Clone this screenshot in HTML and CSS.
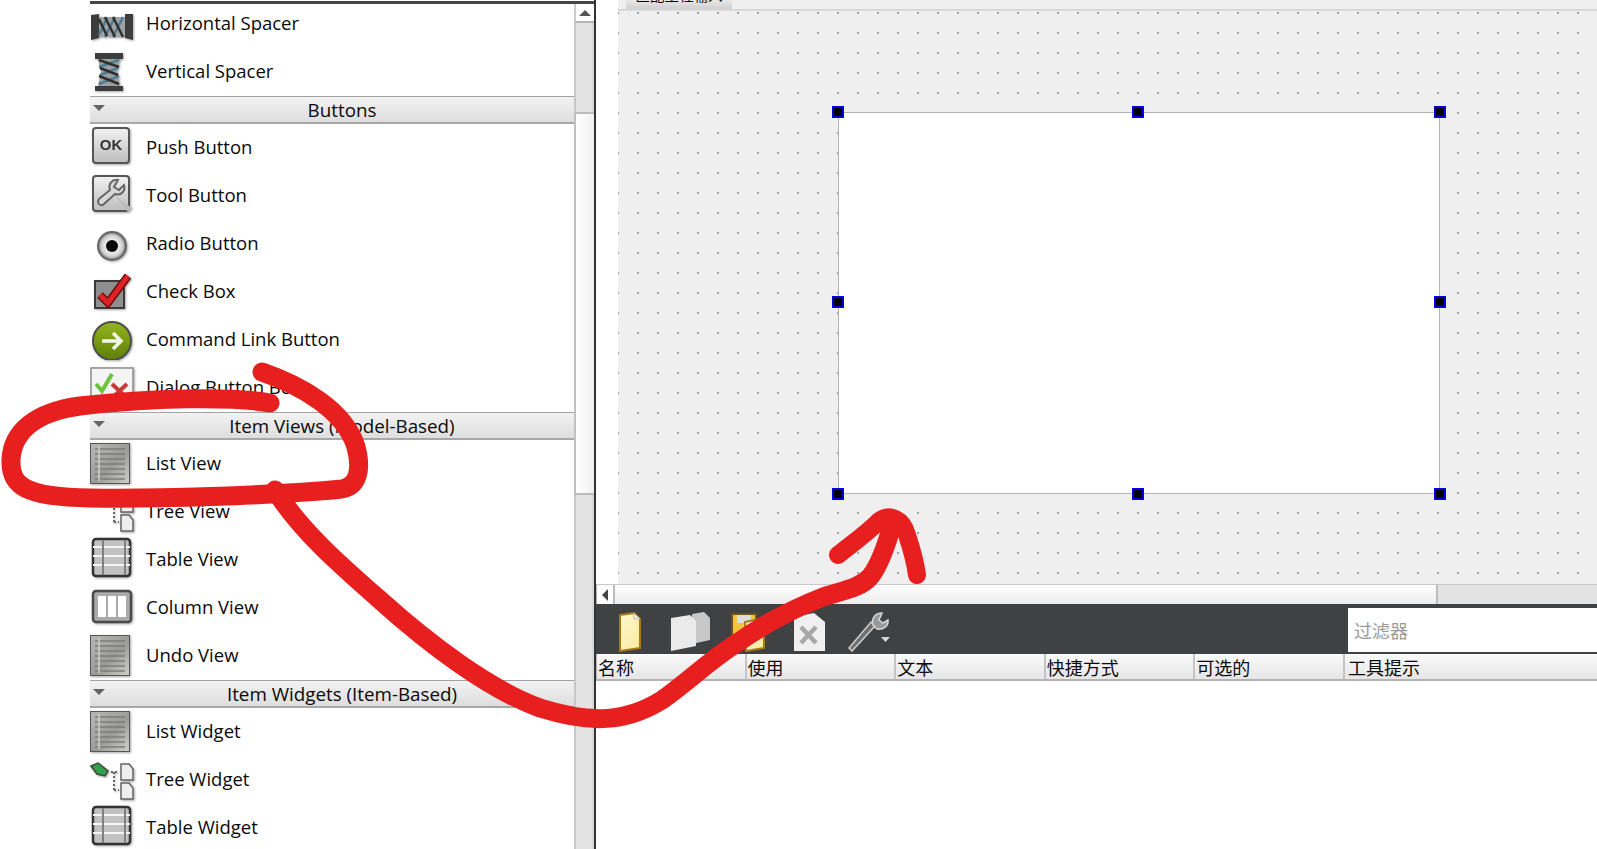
FILE: index.html
```html
<!DOCTYPE html>
<html lang="zh">
<head>
<meta charset="utf-8">
<title>Qt Designer</title>
<link rel="stylesheet" href="styles.css">
</head>
<body>
<svg class="defs" width="0" height="0" aria-hidden="true">
  <defs>
    <linearGradient id="gBtn" x1="0" y1="0" x2="0" y2="1"><stop offset="0" stop-color="#f2f2f2"/><stop offset="1" stop-color="#bdbdbd"/></linearGradient>
    <linearGradient id="gList" x1="0" y1="0" x2="1" y2="1"><stop offset="0" stop-color="#b8b8b4"/><stop offset=".55" stop-color="#9a9a96"/><stop offset="1" stop-color="#d0d0cc"/></linearGradient>
    <linearGradient id="gGreen" x1="0" y1="0" x2="0" y2="1"><stop offset="0" stop-color="#94b51d"/><stop offset="1" stop-color="#5f7f07"/></linearGradient>
    <linearGradient id="gYellow" x1="0" y1="0" x2="1" y2="1"><stop offset="0" stop-color="#fff8cf"/><stop offset="1" stop-color="#fbeb9e"/></linearGradient>
    <radialGradient id="gRadio"><stop offset=".3" stop-color="#fafafa"/><stop offset=".75" stop-color="#d0d0d0"/><stop offset="1" stop-color="#777"/></radialGradient>

    <symbol id="i-hspacer" viewBox="0 0 44 44">
      <path d="M1 15 L9 14 V38 L1 40 Z M35 14 H43 V40 L35 38 Z" fill="#3d3d3d"/>
      <rect x="9" y="17" width="26" height="20" fill="#a2a2a2"/>
      <path d="M9 35 L17 18 M15 37 L25 17 M23 37 L33 17" stroke="#4d7d95" stroke-width="2.5" fill="none"/>
      <path d="M9 19 L17 36 M15 17 L25 37 M23 17 L33 37" stroke="#2e2e2e" stroke-width="2.5" fill="none"/>
    </symbol>
    <symbol id="i-vspacer" viewBox="0 0 44 44">
      <path d="M5 6 H33 V12 H5 Z M5 39 H33 V45 H5 Z" fill="#3d3d3d"/>
      <path d="M8 12 H30 L27 25 L30 39 H8 L11 25 Z" fill="#9e9e9e"/>
      <path d="M9 20 L29 13 M10 28 L28 21 M9 37 L29 29" stroke="#4d7d95" stroke-width="2.5" fill="none"/>
      <path d="M9 13 L29 20 M10 21 L28 28 M9 29 L29 37" stroke="#2e2e2e" stroke-width="2.5" fill="none"/>
    </symbol>
    <symbol id="i-ok" viewBox="0 0 44 44">
      <rect x="3" y="4" width="36" height="35" rx="3" fill="url(#gBtn)" stroke="#555" stroke-width="2"/>
      <text x="21" y="26" class="ok-text" text-anchor="middle">OK</text>
    </symbol>
    <symbol id="i-tool" viewBox="0 0 44 44">
      <rect x="3" y="4" width="36" height="35" rx="3" fill="url(#gBtn)" stroke="#555" stroke-width="2"/>
      <path d="M28 8 C22 7 18 12 20 18 L9 27 C6 31 11 35 14 32 L25 22 C31 24 36 19 34 13 L29 18 L24 15 Z" fill="#d8d8d8" stroke="#666" stroke-width="2"/>
      <path d="M25 24 L38 40 L42 36 Z" fill="#bbb"/>
    </symbol>
    <symbol id="i-radio" viewBox="0 0 44 44">
      <circle cx="22" cy="26" r="14" fill="url(#gRadio)" stroke="#666" stroke-width="2"/>
      <circle cx="22" cy="26" r="6" fill="#0a0a0a"/>
    </symbol>
    <symbol id="i-check" viewBox="0 0 44 44">
      <rect x="5" y="13" width="29" height="27" fill="#8f8f8f" stroke="#3a3a3a" stroke-width="2"/>
      <path d="M10 27 L18 35 L38 8" fill="none" stroke="#6e0d0d" stroke-width="8"/>
      <path d="M10 27 L18 35 L38 8" fill="none" stroke="#dd2228" stroke-width="5"/>
    </symbol>
    <symbol id="i-cmd" viewBox="0 0 44 44">
      <circle cx="22" cy="25" r="19" fill="url(#gGreen)" stroke="#4d4d4d" stroke-width="2"/>
      <path d="M12 25 H30 M23 17 L31 25 L23 33" fill="none" stroke="#f2f4e6" stroke-width="3.5"/>
    </symbol>
    <symbol id="i-dialog" viewBox="0 0 44 44">
      <rect x="1" y="4" width="42" height="44" fill="#f4f4f4" stroke="#8f8f8f" stroke-width="1.5"/>
      <path d="M6 20 L12 27 L22 10" fill="none" stroke="#6cc53c" stroke-width="4"/>
      <path d="M22 20 L37 34 M37 20 L22 34" fill="none" stroke="#c83a3a" stroke-width="4"/>
    </symbol>
    <symbol id="i-list" viewBox="0 0 44 44">
      <rect x="0.5" y="3.5" width="39" height="40" fill="url(#gList)" stroke="#555"/>
      <path d="M5 9 H35 M5 14 H35 M5 19 H35 M5 24 H35 M5 29 H35 M5 34 H35 M5 39 H35" stroke="#7c7c78" stroke-width="1.5"/>
      <path d="M9 6 V41" stroke="#cfcfcb" stroke-width="1.5"/>
    </symbol>
    <symbol id="i-tree" viewBox="0 0 44 44">
      <path d="M21 16 H27 M24 16 V34 M24 34 H29" stroke="#666" stroke-width="2" stroke-dasharray="2 2" fill="none"/>
      <path d="M31 8 H39 L43 13 V24 H31 Z" fill="#eee" stroke="#666" stroke-width="1.5"/>
      <path d="M31 27 H39 L43 32 V43 H31 Z" fill="#eee" stroke="#666" stroke-width="1.5"/>
    </symbol>
    <symbol id="i-treew" viewBox="0 0 44 44">
      <path d="M21 16 H27 M24 16 V34 M24 34 H29" stroke="#666" stroke-width="2" stroke-dasharray="2 2" fill="none"/>
      <path d="M31 8 H39 L43 13 V24 H31 Z" fill="#eee" stroke="#666" stroke-width="1.5"/>
      <path d="M31 27 H39 L43 32 V43 H31 Z" fill="#eee" stroke="#666" stroke-width="1.5"/>
      <path d="M1 10 L8 7 L18 15 L15 20 L7 18 Z" fill="#2fa14a" stroke="#444" stroke-width="1.5"/>
    </symbol>
    <symbol id="i-table" viewBox="0 0 44 44">
      <rect x="3" y="3" width="37" height="37" rx="3" fill="#c2c2c2" stroke="#333" stroke-width="2.5"/>
      <path d="M3 11 H40 M3 20 H40 M3 29 H40" stroke="#f6f6f6" stroke-width="2"/>
      <path d="M13 4 V39 M35 4 V39" stroke="#808080" stroke-width="2"/>
    </symbol>
    <symbol id="i-column" viewBox="0 0 44 44">
      <rect x="3" y="7" width="38" height="31" rx="3" fill="#aaa" stroke="#4a4a4a" stroke-width="2.5"/>
      <rect x="8" y="12" width="8" height="21" fill="#fff"/><rect x="18" y="12" width="8" height="21" fill="#fff"/><rect x="28" y="12" width="8" height="21" fill="#fff"/>
    </symbol>

    <symbol id="t-new" viewBox="0 0 44 40">
      <path d="M10 3 L24 1 L30 7 V36 L10 39 Z" fill="url(#gYellow)" stroke="#a6791b" stroke-width="2"/>
      <path d="M24 1 V7 H30" fill="#eee" stroke="#bbb"/>
    </symbol>
    <symbol id="t-copy" viewBox="0 0 44 40">
      <path d="M22 2 L34 0 L40 6 V28 L22 32 Z" fill="#c8c8c8"/>
      <path d="M1 6 L20 3 L26 9 V34 L1 39 Z" fill="#eaeaea"/>
    </symbol>
    <symbol id="t-save" viewBox="0 0 44 40">
      <rect x="3" y="2" width="24" height="30" fill="#f2c53d" stroke="#6e5412" stroke-width="2"/>
      <rect x="8" y="3" width="14" height="8" fill="#ddd"/>
      <path d="M16 10 L30 7 L35 12 V36 L17 39 Z" fill="url(#gYellow)" stroke="#a6791b" stroke-width="2"/>
    </symbol>
    <symbol id="t-del" viewBox="0 0 44 40">
      <path d="M5 5 L25 1 L36 10 V39 H5 Z" fill="#f0f0f0"/>
      <path d="M12 15 L27 31 M27 15 L12 31" stroke="#a8a8a8" stroke-width="4.5"/>
    </symbol>
    <symbol id="t-tool" viewBox="0 0 44 40">
      <path d="M1 36 L4 39 L27 14 L23 10 Z" fill="#6f6f6f" stroke="#cfcfcf" stroke-width="1.5"/>
      <path d="M34 1 C27 1 23 7 25 13 L29 17 C35 18 41 14 40 8 L35 11 L31 8 Z" fill="#999" stroke="#d6d6d6" stroke-width="1.5"/>
      <path d="M33 25 H42 L37.500 30 Z" fill="#d8d8d8"/>
    </symbol>
  </defs>
</svg>

<div class="app">
  <aside class="sidebar">
    <div class="panel">
      <div class="rows">
        <div class="row"><svg class="ic"><use href="#i-hspacer"/></svg><span>Horizontal Spacer</span></div>
        <div class="row"><svg class="ic"><use href="#i-vspacer"/></svg><span>Vertical Spacer</span></div>

        <div class="sect"><i class="caret"></i><span>Buttons</span></div>
        <div class="row"><svg class="ic"><use href="#i-ok"/></svg><span>Push Button</span></div>
        <div class="row"><svg class="ic"><use href="#i-tool"/></svg><span>Tool Button</span></div>
        <div class="row"><svg class="ic"><use href="#i-radio"/></svg><span>Radio Button</span></div>
        <div class="row"><svg class="ic"><use href="#i-check"/></svg><span>Check Box</span></div>
        <div class="row"><svg class="ic"><use href="#i-cmd"/></svg><span>Command Link Button</span></div>
        <div class="row"><svg class="ic"><use href="#i-dialog"/></svg><span>Dialog Button Box</span></div>

        <div class="sect"><i class="caret"></i><span>Item Views (Model-Based)</span></div>
        <div class="row"><svg class="ic"><use href="#i-list"/></svg><span>List View</span></div>
        <div class="row"><svg class="ic"><use href="#i-tree"/></svg><span>Tree View</span></div>
        <div class="row"><svg class="ic"><use href="#i-table"/></svg><span>Table View</span></div>
        <div class="row"><svg class="ic"><use href="#i-column"/></svg><span>Column View</span></div>
        <div class="row"><svg class="ic"><use href="#i-list"/></svg><span>Undo View</span></div>

        <div class="sect"><i class="caret"></i><span>Item Widgets (Item-Based)</span></div>
        <div class="row"><svg class="ic"><use href="#i-list"/></svg><span>List Widget</span></div>
        <div class="row"><svg class="ic"><use href="#i-treew"/></svg><span>Tree Widget</span></div>
        <div class="row"><svg class="ic"><use href="#i-table"/></svg><span>Table Widget</span></div>
      </div>
      <div class="vscroll">
        <div class="vs-btn"><i class="tri-up"></i></div>
        <div class="vs-trough"></div>
        <div class="vs-thumb"></div>
        <div class="vs-rest"></div>
      </div>
    </div>
  </aside>

  <main class="main">
    <div class="design">
      <div class="tabstrip"><div class="tab"><span>匹配工程输入</span></div></div>
      <div class="canvas">
        <div class="form">
          <i class="h tl"></i><i class="h tc"></i><i class="h tr"></i>
          <i class="h ml"></i><i class="h mr"></i>
          <i class="h bl"></i><i class="h bc"></i><i class="h br"></i>
        </div>
      </div>
    </div>
    <div class="hscroll">
      <div class="hs-btn"><i class="tri-left"></i></div>
      <div class="hs-thumb"></div>
      <div class="hs-rest"></div>
    </div>
    <div class="toolbar">
      <div class="tools">
        <svg class="tool"><use href="#t-new"/></svg>
        <svg class="tool"><use href="#t-copy"/></svg>
        <svg class="tool"><use href="#t-save"/></svg>
        <svg class="tool"><use href="#t-del"/></svg>
        <svg class="tool"><use href="#t-tool"/></svg>
      </div>
      <div class="filter">过滤器</div>
    </div>
    <div class="thead">
      <div class="th">名称</div>
      <div class="th">使用</div>
      <div class="th">文本</div>
      <div class="th">快捷方式</div>
      <div class="th">可选的</div>
      <div class="th last">工具提示</div>
    </div>
  </main>
</div>

<svg class="ink" viewBox="0 0 1597 849" aria-hidden="true">
  <path d="M270 403 C230 396 150 398 80 406 C35 412 12 432 11 460 C10 486 25 497 90 498 C150 499 270 496 342 489 C358 486 362 470 356 447 C345 410 300 385 262 372"/>
  <path d="M275 490 C300 530 340 565 380 600 C430 645 490 690 540 708 C585 722 622 725 662 700 C690 680 710 660 737 643 C770 620 800 606 823 597 C845 590 860 588 870 577 C880 565 888 540 893 522"/>
  <path class="thin" d="M838 555 C850 545 865 535 878 522 C890 512 903 520 907 535 C912 550 915 560 917 575"/>
</svg>
</body>
</html>
```
FILE: styles.css
```css
* { box-sizing: border-box; }
html, body { margin: 0; height: 849px; overflow: hidden; background: #fff; }
body {
  font-family: "Open Sans", "Noto Sans CJK SC", sans-serif;
  font-size: 18.500px;
  color: #0a0a0a;
}
.defs { position: absolute; }
.app { display: flex; width: 1597px; height: 849px; }

/* widget box */
.sidebar {
  width: 596px;
  flex: none;
  padding-left: 90px;
  border-right: 2px solid #333;
  height: 849px;
  overflow: hidden;
}
.panel {
  display: flex;
  margin-top: 1px;
  border-top: 3px solid #444;
  height: 848px;
}
.rows { width: 484px; flex: none; margin-top: -4px; }
.row { display: flex; align-items: center; height: 48px; gap: 12px; padding-bottom: 4px; }
.row:first-child { height: 47px; }
.row:nth-child(-n+2) { padding-bottom: 2px; }
.row:nth-child(2) { margin-bottom: 1px; }
.ic {
  width: 44px;
  height: 44px;
  flex: none;
  filter: blur(.45px) drop-shadow(1px 1px 1px rgba(0,0,0,.35));
}
.row:nth-child(-n+2) .ic { margin-top: -2px; }
.ok-text { font: 700 15px "Liberation Sans", sans-serif; fill: #333; }
.sect {
  position: relative;
  height: 28px;
  width: 504px;
  border-top: 1px solid #a3a3a3;
  border-bottom: 2px solid #a8a8a8;
  background: linear-gradient(#f2f2f2, #dedede);
  text-align: center;
  line-height: 26px;
  font-size: 18.800px;
}
.caret {
  position: absolute;
  left: 3px;
  top: 8px;
  border-left: 6px solid transparent;
  border-right: 6px solid transparent;
  border-top: 6px solid #666;
}

/* vertical scroll bar */
.vscroll {
  width: 20px;
  flex: none;
  display: flex;
  flex-direction: column;
  position: relative;
  z-index: 1;
  height: 845px;
}
.vs-btn {
  height: 19px;
  background: #fff;
  border-left: 2px solid #ccc;
  border-bottom: 2px solid #b5b5b5;
  display: flex;
  align-items: center;
  justify-content: center;
}
.tri-up {
  border-left: 6px solid transparent;
  border-right: 6px solid transparent;
  border-bottom: 6px solid #555;
}
.vs-trough {
  height: 89px;
  background: #e3e3e3;
  border-left: 2px solid #c8c8c8;
  border-right: 2px solid #d8d8d8;
}
.vs-thumb {
  height: 383px;
  background: linear-gradient(90deg, #fff, #f0f0f0);
  border-left: 2px solid #c0c0c0;
  border-top: 2px solid #bcbcbc;
  border-bottom: 2px solid #bcbcbc;
}
.vs-rest {
  flex: 1;
  background: #e3e3e3;
  border-left: 2px solid #c8c8c8;
  border-right: 2px solid #d8d8d8;
}

/* right side */
.main { flex: 1; display: flex; flex-direction: column; min-width: 0; }
.design { height: 584px; padding-left: 22px; display: flex; flex-direction: column; }
.tabstrip {
  height: 11px;
  flex: none;
  background: #efefef;
  border-bottom: 2px solid #d8d8d8;
  padding-left: 8px;
}
.tab {
  width: 106px;
  height: 9px;
  background: linear-gradient(#e8e8e8, #cfcfcf);
  overflow: hidden;
  display: flex;
  align-items: flex-end;
  justify-content: center;
  line-height: 16px;
  font-size: 14.500px;
}
.tab span { display: block; height: 16px; margin-bottom: 5px; white-space: nowrap; }
.canvas {
  flex: 1;
  background-color: #efefef;
  background-image: conic-gradient(at 2px 2px, transparent 75%, #a0a0a0 0);
  background-size: 20px 20px;
  background-position: -1px 1px;
  padding: 101px 0 0 220px;
}
.form {
  position: relative;
  width: 602px;
  height: 382px;
  background: #fff;
  border: 1px solid #b4b4b4;
}
.h {
  position: absolute;
  width: 12px;
  height: 12px;
  margin: -7px 0 0 -7px;
  background: #000;
  border: 2px solid #0000e0;
}
.tl, .tc, .tr { top: 0; }
.ml, .mr { top: 50%; }
.bl, .bc, .br { top: 100%; margin-top: -5px; }
.tl, .ml, .bl { left: 0; }
.tc, .bc { left: 50%; }
.tr, .mr, .br { left: 100%; margin-left: -5px; }

.hscroll {
  height: 20px;
  flex: none;
  display: flex;
  border-top: 1px solid #c8c8c8;
  border-left: 1px solid #b0b0b0;
}
.hs-btn {
  width: 18px;
  flex: none;
  background: #fff;
  border-right: 2px solid #bdbdbd;
  display: flex;
  align-items: center;
  justify-content: center;
}
.tri-left {
  border-top: 6px solid transparent;
  border-bottom: 6px solid transparent;
  border-right: 6px solid #444;
}
.hs-thumb {
  width: 823px;
  flex: none;
  background: linear-gradient(#fff, #ececec);
  border-right: 2px solid #bdbdbd;
}
.hs-rest { flex: 1; background: #e3e3e3; }

.toolbar {
  height: 50px;
  flex: none;
  background: #404143;
  display: flex;
  justify-content: space-between;
  padding: 4px 0 2px 14px;
}
.tools { display: flex; gap: 15.500px; padding-top: 4px; }
.tool { width: 44px; height: 40px; flex: none; }
.filter {
  width: 249px;
  background: #fff;
  color: #999;
  font-size: 18px;
  padding-left: 6px;
  line-height: 44px;
  font-family: "Noto Sans CJK SC", sans-serif;
}

.thead {
  height: 27px;
  flex: none;
  display: flex;
  border-bottom: 2px solid #b4b4b4;
  border-left: 1px solid #b0b0b0;
  background: linear-gradient(#fafafa, #e6e6e6);
  font-family: "Noto Sans CJK SC", sans-serif;
  font-size: 18px;
  line-height: 26px;
}
.th {
  width: 149.600px;
  flex: none;
  padding-left: 1px;
  border-right: 2px solid #c4c4c4;
  overflow: hidden;
  white-space: nowrap;
}
.th.last { flex: 1; border-right: 0; padding-left: 3px; }

/* hand-drawn annotation over the screenshot */
.ink {
  position: absolute;
  left: 0;
  top: 0;
  z-index: 2;
  width: 1597px;
  height: 849px;
  pointer-events: none;
  fill: none;
  stroke: #e81f1f;
  stroke-width: 19px;
  stroke-linecap: round;
  stroke-linejoin: round;
}
.ink .thin { stroke-width: 18px; }
```
